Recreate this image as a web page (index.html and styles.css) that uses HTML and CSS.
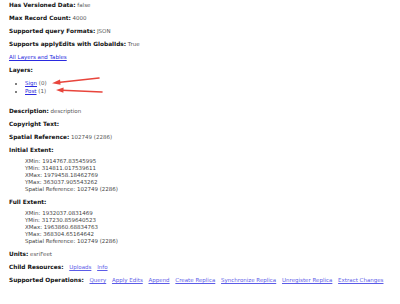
FILE: index.html
```html
<!DOCTYPE html>
<html>
<head>
  <title>FeatureServer</title>
  <link rel="stylesheet" href="styles.css">
</head>
<body>
  <div class="row"><b>Has Versioned Data:</b> false</div>
  <div class="row"><b>Max Record Count:</b> 4000</div>
  <div class="row"><b>Supported query Formats:</b> JSON</div>
  <div class="row"><b>Supports applyEdits with GlobalIds:</b> True</div>
  <div class="row"><a href="#">All Layers and Tables</a></div>
  <div class="row"><b>Layers:</b></div>
  <ul class="layers">
    <li><a href="#">Sign</a> (0)</li>
    <li><a href="#">Post</a> (1)</li>
  </ul>
  <div class="row"><b>Description:</b> description</div>
  <div class="row"><b>Copyright Text:</b></div>
  <div class="row"><b>Spatial Reference:</b> 102749 (2286)</div>
  <div class="row head"><b>Initial Extent:</b></div>
  <div class="extent">
    XMin: 1914767.83545995<br>
    YMin: 314811.017539611<br>
    XMax: 1979458.18462769<br>
    YMax: 363037.905543262<br>
    Spatial Reference: 102749 (2286)
  </div>
  <div class="row head"><b>Full Extent:</b></div>
  <div class="extent">
    XMin: 1932037.0831469<br>
    YMin: 317230.859640523<br>
    XMax: 1963860.68834763<br>
    YMax: 368304.65164642<br>
    Spatial Reference: 102749 (2286)
  </div>
  <div class="row"><b>Units:</b> esriFeet</div>
  <div class="row"><b>Child Resources:</b> <a class="op" href="#">Uploads</a> <a class="op" href="#">Info</a></div>
  <div class="row"><b>Supported Operations:</b> <a class="op" href="#">Query</a> <a class="op" href="#">Apply Edits</a> <a class="op" href="#">Append</a> <a class="op" href="#">Create Replica</a> <a class="op" href="#">Synchronize Replica</a> <a class="op" href="#">Unregister Replica</a> <a class="op" href="#">Extract Changes</a></div>

  <svg class="arrows" width="400" height="304" viewBox="0 0 400 304">
    <line x1="99" y1="78" x2="58" y2="82.5" stroke="#e8453c" stroke-width="1.6" stroke-linecap="round"/>
    <polygon points="52,83.2 60,79.6 60.6,84.8" fill="#e8453c"/>
    <line x1="102" y1="92" x2="62" y2="90.3" stroke="#e8453c" stroke-width="1.6" stroke-linecap="round"/>
    <polygon points="56,90 63.6,87.6 63.4,92.8" fill="#e8453c"/>
  </svg>
</body>
</html>
```

FILE: styles.css
```css
body {
  margin: 0;
  padding: 2px 0 0 9px;
  font-family: "DejaVu Sans", Verdana, sans-serif;
  font-size: 5.5px;
  line-height: 7px;
  color: #555;
  background: #fff;
  position: relative;
}
b { color: #111; font-size: 5.8px; line-height: 6px; }
a { color: #2a2ae0; }
a.op { color: #5c5ce8; margin-left: 4px; }
.row {
  height: 7px;
  margin: 0 0 6px;
  white-space: nowrap;
}
.head { margin-bottom: 4px; }
.layers {
  margin: 5px 0 13px;
  padding-left: 16px;
  line-height: 7.5px;
}
.extent {
  padding-left: 16px;
  margin-bottom: 6px;
  color: #444;
}
.arrows {
  position: absolute;
  top: 0;
  left: 0;
}
```
